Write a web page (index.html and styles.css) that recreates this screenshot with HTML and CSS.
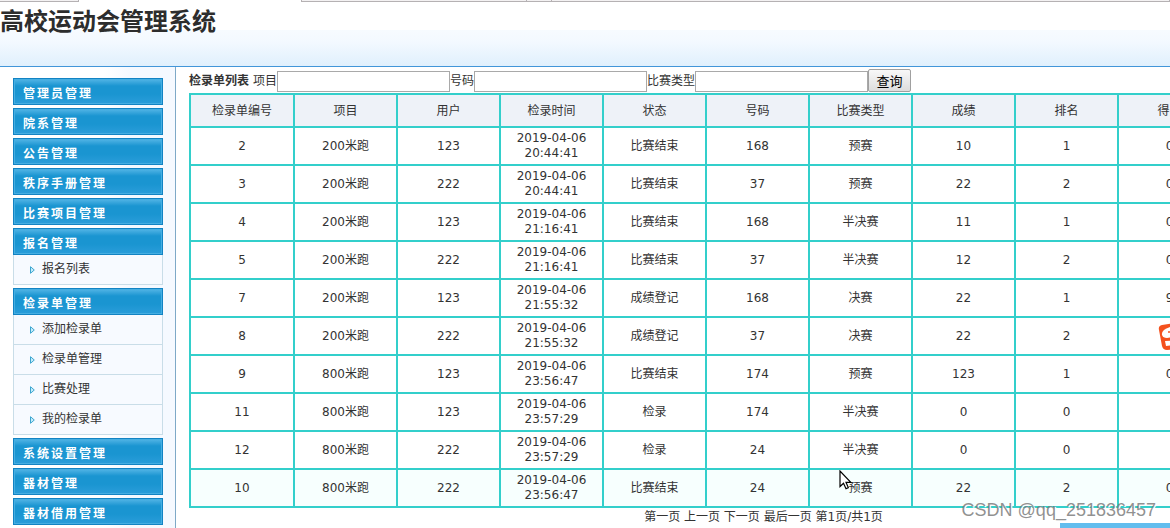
FILE: index.html
```html
<!DOCTYPE html>
<html lang="zh-CN">
<head>
<meta charset="utf-8">
<title>高校运动会管理系统</title>
<link rel="stylesheet" href="styles.css">
</head>
<body>
<div class="page">
  <header class="banner">
    <div class="tabs"><span class="tab tab-first"></span><span class="tab-active"></span><span class="tab tab-mid"></span><span class="tab tab-small"></span><span class="tab tab-rest"></span></div>
    <h1 class="title">高校运动会管理系统</h1>
  </header>
  <div class="layout">
    <nav class="sidebar">
      <section><button class="menu-head">管理员管理</button></section>
      <section><button class="menu-head">院系管理</button></section>
      <section><button class="menu-head">公告管理</button></section>
      <section><button class="menu-head">秩序手册管理</button></section>
      <section><button class="menu-head">比赛项目管理</button></section>
      <section><button class="menu-head">报名管理</button>
        <a class="menu-item" href="#"><svg class="arrow" viewBox="0 0 5 8"><path d="M.5 .7V7.3L4.3 4Z"/></svg>报名列表</a>
      </section>
      <section><button class="menu-head">检录单管理</button>
        <a class="menu-item" href="#"><svg class="arrow" viewBox="0 0 5 8"><path d="M.5 .7V7.3L4.3 4Z"/></svg>添加检录单</a>
        <a class="menu-item" href="#"><svg class="arrow" viewBox="0 0 5 8"><path d="M.5 .7V7.3L4.3 4Z"/></svg>检录单管理</a>
        <a class="menu-item" href="#"><svg class="arrow" viewBox="0 0 5 8"><path d="M.5 .7V7.3L4.3 4Z"/></svg>比赛处理</a>
        <a class="menu-item" href="#"><svg class="arrow" viewBox="0 0 5 8"><path d="M.5 .7V7.3L4.3 4Z"/></svg>我的检录单</a>
      </section>
      <section><button class="menu-head">系统设置管理</button></section>
      <section><button class="menu-head">器材管理</button></section>
      <section><button class="menu-head">器材借用管理</button></section>
    </nav>
    <main class="content">
      <form class="search">
        <strong class="search-title">检录单列表</strong>
        <label for="item">项目</label><input class="field" id="item" type="text">
        <label for="number">号码</label><input class="field" id="number" type="text">
        <label for="type">比赛类型</label><input class="field" id="type" type="text">
        <button class="query" type="button">查询</button>
      </form>
      <table class="list">
        <colgroup><col class="col-id"><col span="9"></colgroup>
        <thead><tr><th>检录单编号</th><th>项目</th><th>用户</th><th>检录时间</th><th>状态</th><th>号码</th><th>比赛类型</th><th>成绩</th><th>排名</th><th>得分</th></tr></thead>
        <tbody>
          <tr><td>2</td><td>200米跑</td><td>123</td><td>2019-04-06 20:44:41</td><td>比赛结束</td><td>168</td><td>预赛</td><td>10</td><td>1</td><td>0</td></tr>
          <tr><td>3</td><td>200米跑</td><td>222</td><td>2019-04-06 20:44:41</td><td>比赛结束</td><td>37</td><td>预赛</td><td>22</td><td>2</td><td>0</td></tr>
          <tr><td>4</td><td>200米跑</td><td>123</td><td>2019-04-06 21:16:41</td><td>比赛结束</td><td>168</td><td>半决赛</td><td>11</td><td>1</td><td>0</td></tr>
          <tr><td>5</td><td>200米跑</td><td>222</td><td>2019-04-06 21:16:41</td><td>比赛结束</td><td>37</td><td>半决赛</td><td>12</td><td>2</td><td>0</td></tr>
          <tr><td>7</td><td>200米跑</td><td>123</td><td>2019-04-06 21:55:32</td><td>成绩登记</td><td>168</td><td>决赛</td><td>22</td><td>1</td><td>9</td></tr>
          <tr><td>8</td><td>200米跑</td><td>222</td><td>2019-04-06 21:55:32</td><td>成绩登记</td><td>37</td><td>决赛</td><td>22</td><td>2</td><td></td></tr>
          <tr><td>9</td><td>800米跑</td><td>123</td><td>2019-04-06 23:56:47</td><td>比赛结束</td><td>174</td><td>预赛</td><td>123</td><td>1</td><td>0</td></tr>
          <tr><td>11</td><td>800米跑</td><td>123</td><td>2019-04-06 23:57:29</td><td>检录</td><td>174</td><td>半决赛</td><td>0</td><td>0</td><td></td></tr>
          <tr><td>12</td><td>800米跑</td><td>222</td><td>2019-04-06 23:57:29</td><td>检录</td><td>24</td><td>半决赛</td><td>0</td><td>0</td><td></td></tr>
          <tr class="hovered"><td>10</td><td>800米跑</td><td>222</td><td>2019-04-06 23:56:47</td><td>比赛结束</td><td>24</td><td>预赛</td><td>22</td><td>2</td><td>0</td></tr>
        </tbody>
      </table>
      <div class="pager"><a href="#">第一页</a> <a href="#">上一页</a> <a href="#">下一页</a> <a href="#">最后一页</a> 第1页/共1页</div>
    </main>
  </div>
  <svg class="float-logo" viewBox="0 0 30 30"><path d="M1 8Q0 4 4 3L22 0Q27 0 28 5L30 21Q30 25 26 26L9 28Q5 28 4 24Z" fill="#f4511e"/><path d="M4 13Q3 8 12 5Q20 4 22 10Q17 15 9 16Q5 16 4 13Z" fill="#fff"/><path d="M7 19L22 18V22L8 24Z" fill="#fff"/><circle cx="11" cy="10" r="1" fill="#f4511e"/></svg>
  <div class="float-bar"></div>
  <div class="watermark">CSDN @qq_251836457</div>
  <svg class="cursor" viewBox="0 0 13 20"><path d="M1 1V16.5L4.5 13.2L7 18.7L9.3 17.6L7 12.3H11.8Z" fill="#fff" stroke="#000" stroke-width="1.2"/></svg>
</div>
</body>
</html>
```
FILE: styles.css
```css
* { box-sizing: border-box; }
body {
  margin: 0;
  background: #fff;
  color: #333;
  font: 12px/15px "DejaVu Sans", "Noto Sans CJK SC", sans-serif;
}
a { color: inherit; text-decoration: none; }
.page { position: relative; height: 100vh; overflow: hidden; display: flex; flex-direction: column; }
.banner {
  flex: none;
  height: 67px;
  border-bottom: 1px solid #4296d9;
  background: linear-gradient(#fff 30px, #f7fbff 30px, #f3f9ff 42px, #e0f0fd 66px);
}
.tabs { display: flex; height: 2px; }
.tab { border-bottom: 1px solid #b5b1b3; border-right: 1px solid #b5b1b3; background: #f3f1f2; }
.tab-first { width: 79px; }
.tab-active { width: 222px; }
.tab-mid { width: 226px; border-left: 1px solid #b5b1b3; }
.tab-small { width: 25px; }
.tab-rest { flex: 1; }
.title {
  margin: 0;
  color: #2d2d2d;
  font: bold 24px/36px "Noto Sans CJK SC", sans-serif;
}
.layout { flex: 1; display: flex; min-height: 0; }
.sidebar {
  flex: none;
  width: 176px;
  padding: 11px 12px 0 13px;
  border-right: 1px solid #7ea9c7;
  background: linear-gradient(90deg, #fff 104px, #f5f9ff 130px);
}
.sidebar section { margin-bottom: 3px; }
.menu-head {
  display: block;
  width: 100%;
  height: 27px;
  padding: 3px 0 0 9px;
  border: 1px solid #1283c3;
  background: linear-gradient(#54b5e6, #1a95d1 7px, #1a95d1 15px, #2a9dda);
  box-shadow: inset 0 0 0 1px #45aee2;
  color: #fff;
  font: bold 12px/18px "Noto Sans CJK SC", sans-serif;
  letter-spacing: 2px;
  text-align: left;
}
.menu-item {
  display: flex;
  align-items: center;
  gap: 7px;
  height: 30px;
  padding-left: 16px;
  border: 1px solid #c9dde8;
  border-top: 0;
  background: #f7faff;
  line-height: 17px;
}
.arrow { width: 5px; height: 8px; fill: #c5edfb; stroke: #3ea5cf; stroke-width: 1; }
.content { flex: none; width: 1162px; padding: 2px 0 0 13px; }
.search { display: flex; align-items: flex-end; height: 23px; margin-bottom: 1px; line-height: 21px; }
.search-title { margin-right: 4px; }
.field { width: 173px; height: 21px; padding: 1px; border: 1px solid #a9a9a9; background: #fff; }
.query {
  width: 43px;
  height: 23px;
  padding: 0;
  border: 1px solid #a0a0a0;
  border-radius: 2px;
  background: linear-gradient(#f8f8f8, #dddddd);
  color: #000;
  font: 13px/18px "Noto Sans CJK SC", sans-serif;
}
.list { width: 1033px; table-layout: fixed; border-collapse: collapse; text-align: center; }
.col-id { width: 104px; }
.list th, .list td { padding: 0 14px; border: 2px solid #33cfcb; }
.list th { height: 33px; padding-top: 2px; background: #eef2f8; font-weight: normal; }
.list td { height: 38px; }
.hovered { background: #f7fffe; }
.pager { padding-top: 1px; text-align: center; line-height: 16px; }
.float-logo { position: absolute; left: 1158px; top: 322px; width: 30px; height: 30px; }
.float-bar { position: absolute; left: 1060px; right: 0; bottom: 0; height: 5px; background: #62bdee; }
.watermark {
  position: absolute;
  right: 14px;
  bottom: 7px;
  color: rgba(125, 125, 125, .85);
  font: 18px/22px "Liberation Sans", sans-serif;
  text-shadow: 1px 1px 0 #fff;
}
.cursor { position: absolute; left: 839px; top: 470px; width: 13px; height: 20px; }
```
